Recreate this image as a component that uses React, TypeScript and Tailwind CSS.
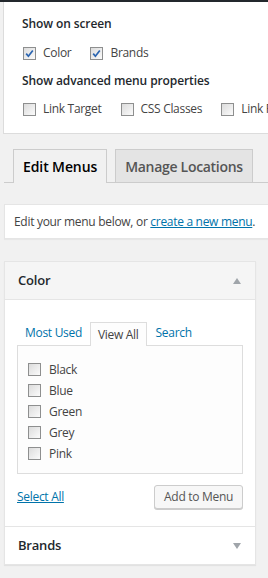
import React from 'react';

function Box({ checked = false }: { checked?: boolean }) {
  return (
    <span className="relative inline-block w-[13px] h-[13px] shrink-0 border border-[#8e8f8f] bg-gradient-to-br from-[#dcdcdc] to-[#fbfbfb]">
      {checked && (
        <svg viewBox="0 0 11 11" className="absolute inset-0 w-[11px] h-[11px]">
          <path d="M2.2 5.6 L4.4 8.2 L8.8 2.4" fill="none" stroke="#2a64b0" strokeWidth="1.7" />
        </svg>
      )}
    </span>
  );
}

function Check({ label, checked, className = '' }: { label: string; checked?: boolean; className?: string }) {
  return (
    <span className={`flex items-center gap-[7px] shrink-0 ${className}`}>
      <Box checked={checked} />
      <span className="text-[12px] tracking-[-0.3px] text-[#444]">{label}</span>
    </span>
  );
}

const colors = ['Black', 'Blue', 'Green', 'Grey', 'Pink'];

export default function App() {
  return (
    <div
      className="w-[268px] h-[578px] bg-[#f1f1f1] overflow-hidden text-[#444]"
      style={{ fontFamily: '"Open Sans", "Noto Sans", sans-serif' }}
    >
      <div className="h-[2px] bg-[#23282d]" />

      <div className="ml-[3px] h-[132px] bg-white border-l border-b border-[#dcdcdc] pl-[18px] pt-[13px] overflow-hidden">
        <div className="h-[18px] leading-[18px] text-[12px] tracking-[-0.1px] font-semibold text-[#23282d]">Show on screen</div>
        <div className="mt-[10px] h-[20px] flex items-center pl-px">
          <Check label="Color" checked />
          <Check label="Brands" checked className="ml-[19px]" />
        </div>
        <div className="mt-[9px] h-[18px] leading-[18px] text-[12px] tracking-[-0.1px] font-semibold text-[#23282d] whitespace-nowrap">
          Show advanced menu properties
        </div>
        <div className="mt-[9px] h-[20px] flex items-center pl-px whitespace-nowrap">
          <Check label="Link Target" />
          <Check label="CSS Classes" className="ml-[19px]" />
          <Check label="Link Relationship (XFN)" className="ml-[19px]" />
        </div>
      </div>

      <div className="mt-[15px] ml-[4px] flex items-end gap-[8px] pl-[9px] border-b border-[#cccccc] h-[34px]">
        <div className="h-[34px] -mb-px px-[9px] border border-b-0 border-[#cccccc] bg-[#f1f1f1] flex items-center text-[14px] tracking-[-0.1px] font-semibold text-[#000]">
          Edit Menus
        </div>
        <div className="h-[33px] px-[9px] border border-b-0 border-[#cccccc] bg-[#e4e4e4] flex items-center text-[14px] tracking-[-0.3px] font-semibold text-[#555]">
          Manage Locations
        </div>
      </div>

      <div className="mt-[21px] ml-[4px] h-[35px] bg-white border border-r-0 border-[#e5e5e5] shadow-[0_1px_1px_rgba(0,0,0,0.04)] pl-[9px] flex items-center text-[12px] tracking-[-0.3px] text-[#444] whitespace-nowrap">
        Edit your menu below, or&nbsp;
        <span className="text-[#0073aa] underline">create a new menu</span>.
      </div>

      <div className="mt-[22px] ml-[4px] w-[252px] bg-white border border-[#e5e5e5] shadow-[0_1px_1px_rgba(0,0,0,0.06)]">
        <div className="h-[38px] bg-[#f5f5f5] border-b border-[#e5e5e5] pl-[13px] pr-[13px] flex items-center justify-between">
          <span className="text-[13px] tracking-[-0.2px] font-semibold text-[#23282d]">Color</span>
          <svg width="8" height="6" viewBox="0 0 8 6" className="mr-px">
            <path d="M4 0 L8 6 L0 6 Z" fill="#a0a5aa" />
          </svg>
        </div>

        <div className="pl-[12px] pr-[12px] pt-[21px] pb-[17px]">
          <div className="flex items-end text-[12px] tracking-[-0.3px]">
            <span className="px-[7px] h-[24px] border border-transparent flex items-center text-[#0073aa]">Most Used</span>
            <span className="px-[7px] h-[24px] -mb-px border border-b-0 border-[#dddddd] bg-[#fdfdfd] flex items-center text-[#444] relative z-10">
              View All
            </span>
            <span className="px-[8px] h-[24px] border border-transparent flex items-center text-[#0073aa]">Search</span>
          </div>
          <div className="h-[129px] border border-[#dddddd] bg-[#fdfdfd] pt-[13px] pl-[10px]">
            {colors.map((c) => (
              <div key={c} className="h-[21px] flex items-center gap-[8px]">
                <Box />
                <span className="text-[12px] tracking-[-0.3px] text-[#444]">{c}</span>
              </div>
            ))}
          </div>
          <div className="mt-[11px] flex items-center justify-between">
            <span className="text-[12px] tracking-[-0.3px] text-[#0073aa] underline">Select All</span>
            <span className="h-[24px] px-[9px] rounded-[3px] border border-[#cccccc] bg-[#f7f7f7] shadow-[0_1px_0_#cccccc] flex items-center text-[12px] tracking-[-0.3px] text-[#555]">
              Add to Menu
            </span>
          </div>
        </div>

        <div className="h-[38px] border-t border-[#e5e5e5] pl-[13px] pr-[13px] flex items-center justify-between">
          <span className="text-[13px] tracking-[-0.2px] font-semibold text-[#23282d]">Brands</span>
          <svg width="8" height="6" viewBox="0 0 8 6" className="mr-px">
            <path d="M0 0 L8 0 L4 6 Z" fill="#a0a5aa" />
          </svg>
        </div>
      </div>
    </div>
  );
}
